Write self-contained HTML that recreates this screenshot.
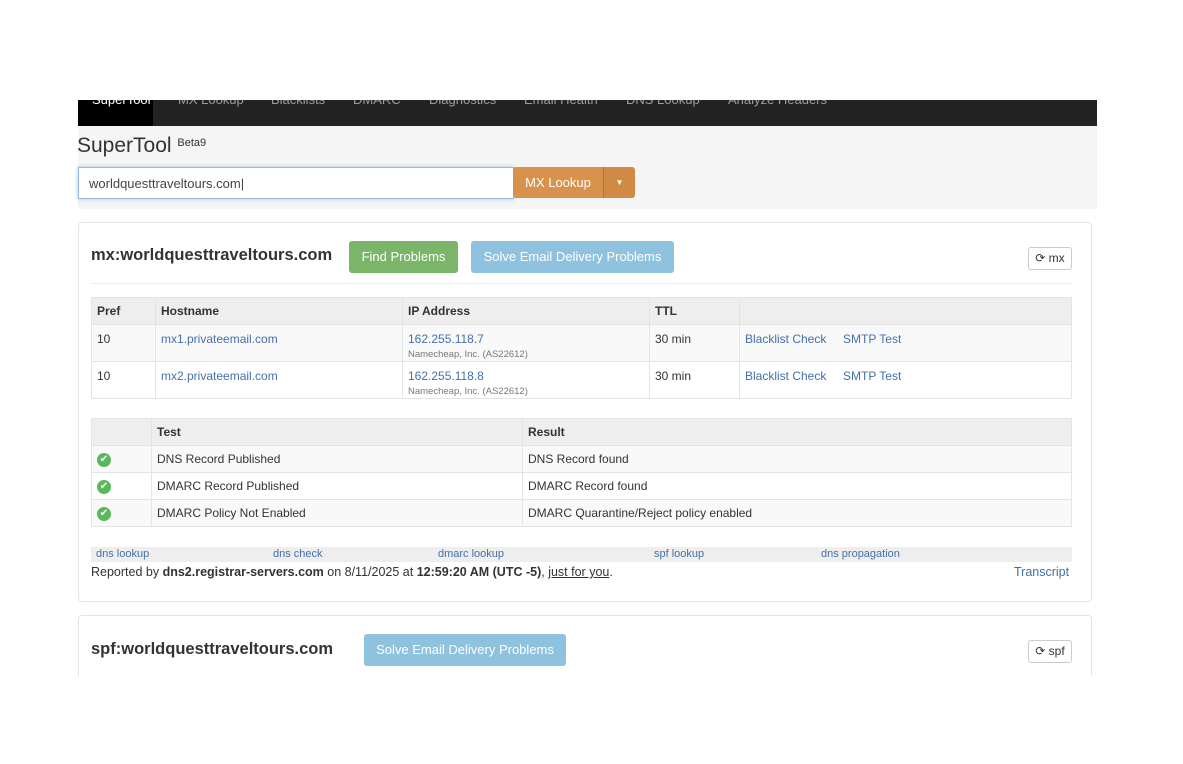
<!DOCTYPE html>
<html><head><meta charset="utf-8"><style>
body{margin:0;width:1183px;height:764px;background:#fff;font-family:"Liberation Sans",sans-serif;position:relative;overflow:hidden;color:#333;font-size:12.5px}
.a{position:absolute}
a{color:#4470a8;text-decoration:none}
.nav{left:78px;top:100px;width:1019px;height:26px;background:#222;overflow:hidden}
.nav span{position:absolute;top:-8px;color:#9d9d9d;font-size:13px}
.hero{left:78px;top:126px;width:1019px;height:83px;background:#f5f5f5}
.panel{border:1px solid #e5e5e5;border-radius:4px;background:#fff}
.btn{position:absolute;color:#fff;font-size:13px;text-align:center;border-radius:3px}
table{border-collapse:collapse;position:absolute;font-size:12px}
td,th{border:1px solid #e4e4e4;text-align:left;padding:0 5px;vertical-align:top}
th{background:#eee;font-weight:bold;height:26px;vertical-align:middle}
.ok{display:inline-block;width:14px;height:14px;border-radius:50%;background:#5cb85c;color:#fff;font-size:10px;line-height:14px;text-align:center}
small{font-size:9.5px;color:#777}
</style></head><body>
<div class="a nav">
<div style="position:absolute;left:0;top:0;width:75px;height:26px;background:#000"></div>
<span style="left:14px;color:#fff">SuperTool</span><span style="left:100px">MX Lookup</span><span style="left:193px">Blacklists</span><span style="left:275px">DMARC</span><span style="left:351px">Diagnostics</span><span style="left:446px">Email Health</span><span style="left:548px">DNS Lookup</span><span style="left:650px">Analyze Headers</span>
</div>
<div class="a hero"></div>
<div class="a" style="left:77px;top:134px;font-size:21px;color:#333">SuperTool <span style="font-size:11px;vertical-align:6px">Beta9</span></div>
<div class="a" style="left:78px;top:167px;width:434px;height:30px;border:1px solid #9db8e0;background:#fff;box-shadow:0 0 4px #a9c3ea"><span style="position:absolute;left:10px;top:8px;font-size:13px;color:#444">worldquesttraveltours.com|</span></div>
<div class="btn" style="left:513px;top:167px;width:90px;height:31px;line-height:31px;background:#d9924c;border-radius:3px 0 0 3px">MX Lookup</div>
<div class="btn" style="left:603px;top:167px;width:31px;height:31px;line-height:31px;background:#d08a44;border-left:1px solid #b87636;font-size:8px;border-radius:0 3px 3px 0">▼</div>

<div class="a panel" style="left:78px;top:222px;width:1012px;height:378px"></div>
<div class="a" style="left:91px;top:246px;font-size:16.5px;font-weight:bold;color:#333">mx:worldquesttraveltours.com</div>
<div class="btn" style="left:349px;top:241px;width:109px;height:32px;line-height:32px;background:#7ab56a">Find Problems</div>
<div class="btn" style="left:471px;top:241px;width:203px;height:32px;line-height:32px;background:#8ec2de">Solve Email Delivery Problems</div>
<div class="a" style="left:1028px;top:247px;width:42px;height:21px;border:1px solid #ccc;border-radius:3px;font-size:12px;line-height:21px;text-align:center">⟳ mx</div>
<div class="a" style="left:91px;top:283px;width:980px;height:1px;background:#eee"></div>

<table style="left:91px;top:297px;width:981px">
<tr><th style="width:53px">Pref</th><th style="width:236px">Hostname</th><th style="width:236px">IP Address</th><th style="width:79px">TTL</th><th></th></tr>
<tr style="height:37px;background:#f9f9f9"><td style="padding-top:7px">10</td><td style="padding-top:7px"><a>mx1.privateemail.com</a></td><td style="padding-top:7px"><a>162.255.118.7</a><br><small>Namecheap, Inc. (AS22612)</small></td><td style="padding-top:7px">30 min</td><td style="padding-top:7px"><a>Blacklist Check</a> &nbsp; &nbsp; <a>SMTP Test</a></td></tr>
<tr style="height:37px"><td style="padding-top:7px">10</td><td style="padding-top:7px"><a>mx2.privateemail.com</a></td><td style="padding-top:7px"><a>162.255.118.8</a><br><small>Namecheap, Inc. (AS22612)</small></td><td style="padding-top:7px">30 min</td><td style="padding-top:7px"><a>Blacklist Check</a> &nbsp; &nbsp; <a>SMTP Test</a></td></tr>
</table>

<table style="left:91px;top:418px;width:981px">
<tr><th style="width:49px"></th><th style="width:360px">Test</th><th>Result</th></tr>
<tr style="height:27px;background:#f9f9f9"><td style="vertical-align:middle"><span class="ok">✔</span></td><td style="vertical-align:middle">DNS Record Published</td><td style="vertical-align:middle">DNS Record found</td></tr>
<tr style="height:27px"><td style="vertical-align:middle"><span class="ok">✔</span></td><td style="vertical-align:middle">DMARC Record Published</td><td style="vertical-align:middle">DMARC Record found</td></tr>
<tr style="height:27px;background:#f9f9f9"><td style="vertical-align:middle"><span class="ok">✔</span></td><td style="vertical-align:middle">DMARC Policy Not Enabled</td><td style="vertical-align:middle">DMARC Quarantine/Reject policy enabled</td></tr>
</table>

<div class="a" style="left:91px;top:547px;width:981px;height:15px;background:#eee;font-size:11px;line-height:15px">
<a style="position:absolute;left:5px">dns lookup</a><a style="position:absolute;left:182px">dns check</a><a style="position:absolute;left:347px">dmarc lookup</a><a style="position:absolute;left:563px">spf lookup</a><a style="position:absolute;left:730px">dns propagation</a></div>
<div class="a" style="left:91px;top:565px;font-size:12.5px">Reported by <b>dns2.registrar-servers.com</b> on 8/11/2025 at <b>12:59:20 AM (UTC -5)</b>, <u>just for you</u>.</div>
<a class="a" style="left:1014px;top:565px">Transcript</a>

<div class="a panel" style="left:78px;top:615px;width:1012px;height:80px"></div>
<div class="a" style="left:91px;top:640px;font-size:16.5px;font-weight:bold">spf:worldquesttraveltours.com</div>
<div class="btn" style="left:364px;top:634px;width:202px;height:32px;line-height:32px;background:#8ec2de">Solve Email Delivery Problems</div>
<div class="a" style="left:1028px;top:640px;width:42px;height:21px;border:1px solid #ccc;border-radius:3px;font-size:12px;line-height:21px;text-align:center;background:#fff">⟳ spf</div>
<div class="a" style="left:0;top:676px;width:1183px;height:88px;background:#fff"></div>
</body></html>
